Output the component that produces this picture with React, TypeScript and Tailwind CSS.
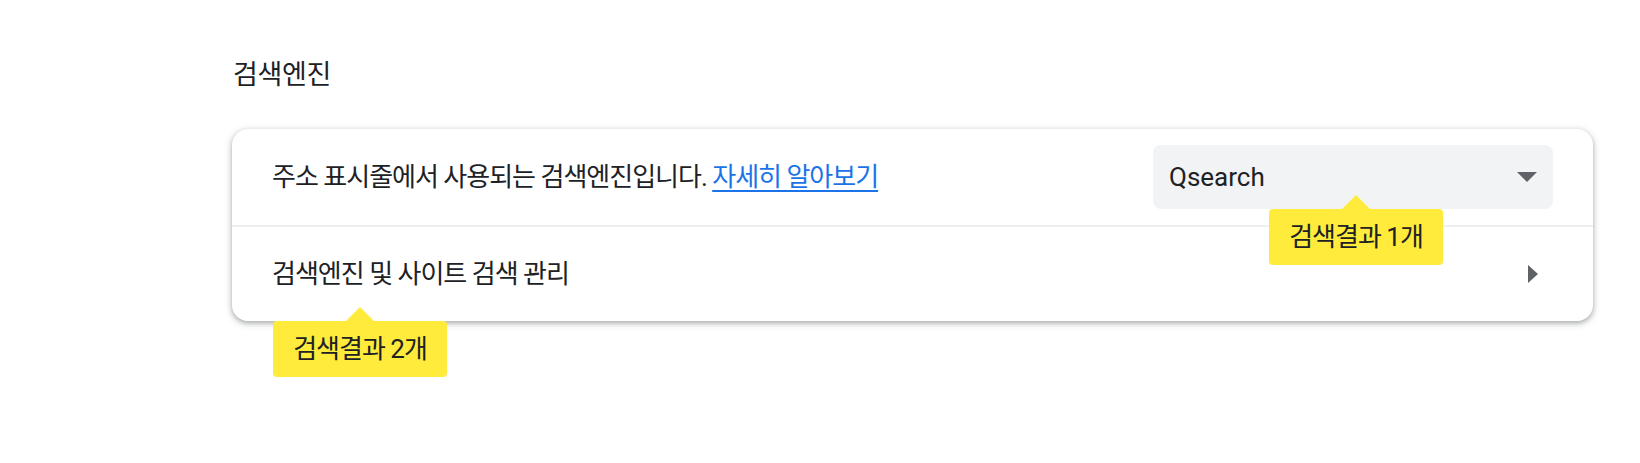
import React from "react";

function Tooltip({ text }: { text: string }) {
  return (
    <div className="relative w-[174px] h-[56px]">
      <div className="absolute left-1/2 -translate-x-1/2 top-[-14px] w-0 h-0 border-l-[14px] border-r-[14px] border-b-[14px] border-l-transparent border-r-transparent border-b-[#ffeb3b]" />
      <div className="w-full h-full rounded-[4px] bg-[#ffeb3b] flex items-center justify-center text-[26px] tracking-[-1px] text-[#202124]">
        {text}
      </div>
    </div>
  );
}

export default function App() {
  return (
    <div className="w-[1640px] h-[463px] bg-white font-[Roboto,'Noto_Sans_CJK_KR',sans-serif] text-[#202124]">
      <div className="ml-[232px] w-[1361px] pt-[55px]">
        <h2 className="h-[40px] leading-[40px] text-[27px] tracking-[-0.3px] pl-[1px] text-[#202124]">
          검색엔진
        </h2>
        <div className="relative mt-[34px] rounded-[16px] bg-white shadow-[0_2px_4px_0_rgba(60,64,67,0.3),0_2px_6px_2px_rgba(60,64,67,0.15)]">
          <div className="flex items-center h-[96px] pl-[40px] pr-[40px]">
            <span className="text-[26px] tracking-[-1px] leading-[32px]">
              주소 표시줄에서 사용되는 검색엔진입니다.{" "}
              <a className="text-[#1a73e8] underline underline-offset-[4px] decoration-[2px]">
                자세히 알아보기
              </a>
            </span>
            <div className="relative ml-auto w-[400px] h-[64px] rounded-[8px] bg-[#f1f3f4] flex items-center pl-[16px] pr-[16px]">
              <span className="text-[26px] font-['Roboto'] text-[#202124]">Qsearch</span>
              <svg className="ml-auto" width="20" height="10" viewBox="0 0 20 10">
                <polygon points="0,0 20,0 10,10" fill="#5f6368" />
              </svg>
              <div className="absolute left-[116px] top-[64px] z-10">
                <Tooltip text="검색결과 1개" />
              </div>
            </div>
          </div>
          <div className="h-[2px] bg-[#eeeeee]" />
          <div className="flex items-center h-[94px] pl-[40px] pr-[55px]">
            <span className="text-[26px] tracking-[-1px] leading-[32px]">
              검색엔진 및 사이트 검색 관리
            </span>
            <svg className="ml-auto" width="10" height="18" viewBox="0 0 10 18">
              <polygon points="0,0 10,9 0,18" fill="#5f6368" />
            </svg>
          </div>
          <div className="absolute left-[41px] top-full z-10">
            <Tooltip text="검색결과 2개" />
          </div>
        </div>
      </div>
    </div>
  );
}
